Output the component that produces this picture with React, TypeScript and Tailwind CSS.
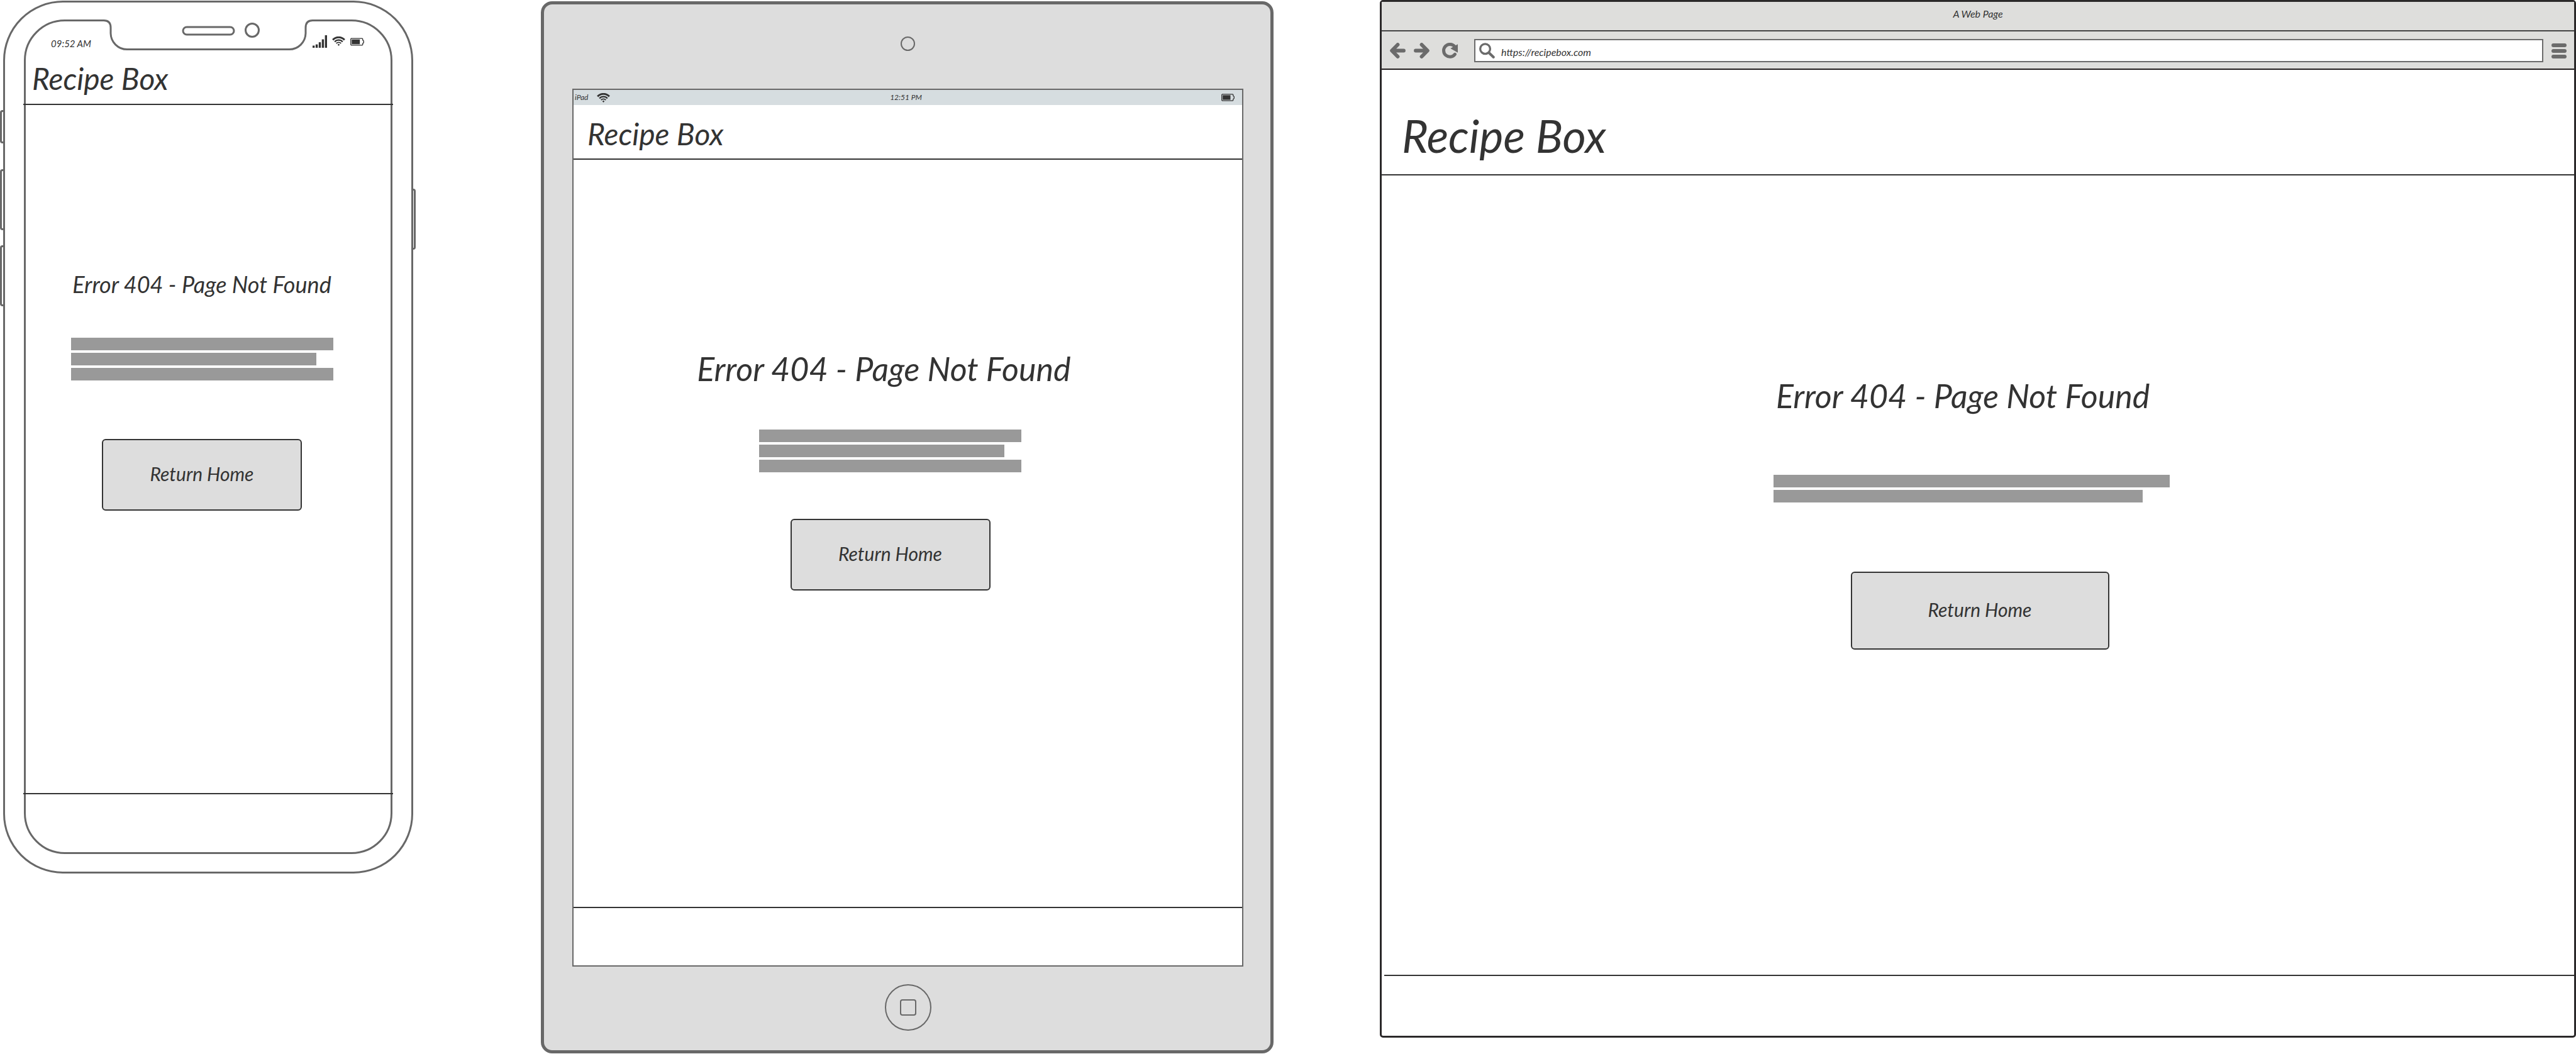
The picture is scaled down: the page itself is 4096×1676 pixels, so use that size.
import React from "react";

function WifiIcon({ className }: { className: string }) {
  return (
    <svg viewBox="0 0 28 20" className={className} fill="none" stroke="currentColor" aria-hidden="true">
      <path d="M1.6 7.2 A17 17 0 0 1 26.4 7.2" strokeWidth="4" />
      <path d="M5.6 11.2 A11.5 11.5 0 0 1 22.4 11.2" strokeWidth="3" />
      <path d="M9 14.6 A7 7 0 0 1 19 14.6" strokeWidth="2.6" />
      <path d="M14 15.6 L16.4 17.2 L14 20 L11.6 17.2 Z" fill="currentColor" stroke="none" />
    </svg>
  );
}

function BatteryIcon({ className }: { className: string }) {
  return (
    <svg viewBox="0 0 29 16" className={className} aria-hidden="true">
      <path d="M2 1 H25 L26 2 V4.5 L28 6 V10 L26 11.5 V14 L25 15 H2 L1 14 V2 Z" fill="none" stroke="currentColor" strokeWidth="1.8" />
      <rect x="3" y="3" width="17" height="10" fill="currentColor" />
    </svg>
  );
}

function SignalIcon({ className }: { className: string }) {
  return (
    <svg viewBox="0 0 30 26" className={className} fill="currentColor" aria-hidden="true">
      <rect x="0" y="21.5" width="4.4" height="4.5" />
      <rect x="6.4" y="19" width="4.4" height="7" />
      <rect x="12.8" y="14.5" width="4.4" height="11.5" />
      <rect x="19.2" y="8.5" width="4.4" height="17.5" />
      <rect x="25.6" y="0" width="4.4" height="26" />
    </svg>
  );
}

function ArrowIcon({ back }: { back?: boolean }) {
  return (
    <svg viewBox="0 0 32 32" className="size-[25px]" fill="none" stroke="#6b6b6b" strokeWidth="7.4" strokeLinecap="round" strokeLinejoin="round" aria-hidden="true">
      {back ? <path d="M16 3.8 L4 16 L16 28.2 M5 16 H28.2" /> : <path d="M16 3.8 L28 16 L16 28.2 M27 16 H3.8" />}
    </svg>
  );
}

function ReloadIcon() {
  return (
    <svg viewBox="0 0 32 32" className="size-[25px]" aria-hidden="true">
      <path d="M26.2 23.4 A12.7 12.7 0 1 1 25.6 7.6" fill="none" stroke="#6b6b6b" strokeWidth="6.4" strokeLinecap="round" />
      <path d="M32 3 V20 L17 11.6 Z" fill="#6b6b6b" />
    </svg>
  );
}

function SearchIcon() {
  return (
    <svg viewBox="0 0 32 32" className="size-[25px] shrink-0" fill="none" stroke="#6b6b6b" aria-hidden="true">
      <circle cx="12.2" cy="12.4" r="10.1" strokeWidth="4.2" />
      <path d="M20 20.5 L29 29.2" strokeWidth="5.4" strokeLinecap="round" />
    </svg>
  );
}

function TextLines({ widths }: { widths: string[] }) {
  return (
    <div className="flex flex-col gap-1">
      {widths.map((w, i) => (
        <div key={i} className={`h-5 bg-[#999999] ${w}`} />
      ))}
    </div>
  );
}

function HomeButton({ className }: { className: string }) {
  return (
    <button type="button" className={`flex items-center justify-center rounded-md border-2 border-[#333333] bg-[#dddddd] pb-1 text-[30px] leading-[40px] ${className}`}>
      Return Home
    </button>
  );
}

function Phone() {
  return (
    <section aria-label="Phone" className="relative pt-px pr-1 pl-[5px]">
      <div className="absolute top-[175px] left-0 h-[53px] w-[7px] rounded-l-[4px] border-[3px] border-r-0 border-[#686868]" />
      <div className="absolute top-[269px] left-0 h-[97px] w-[7px] rounded-l-[4px] border-[3px] border-r-0 border-[#686868]" />
      <div className="absolute top-[390px] left-0 h-[97px] w-[7px] rounded-l-[4px] border-[3px] border-r-0 border-[#686868]" />
      <div className="absolute top-[300px] right-0 h-[97px] w-[6px] rounded-r-[4px] border-[3px] border-l-0 border-[#686868]" />
      <div className="relative rounded-[95px] border-[3px] border-[#686868] bg-white px-[30px] pt-[27px] pb-7">
        <svg viewBox="0 0 336 50" className="absolute top-[27px] left-1/2 h-[50px] w-[336px] -translate-x-1/2" aria-hidden="true">
          <path d="M2 0 V1.5 Q13 1.5 13 13 V22 A26 26 0 0 0 39 47.5 H297 A26 26 0 0 0 323 22 V13 Q323 1.5 334 1.5 V0 Z" fill="white" />
          <path d="M0 1.5 H2 Q13 1.5 13 13 V22 A26 26 0 0 0 39 47.5 H297 A26 26 0 0 0 323 22 V13 Q323 1.5 334 1.5 H336" fill="none" stroke="#686868" strokeWidth="3" />
          <rect x="128" y="12" width="81" height="12" rx="6" fill="none" stroke="#686868" strokeWidth="3" />
          <circle cx="238" cy="17" r="10.500" fill="none" stroke="#686868" strokeWidth="3" />
        </svg>
        <div className="rounded-[65px] border-[3px] border-[#686868]">
          <div className="flex h-[52px] items-end justify-between pr-[42px] pb-2.5 pl-10">
            <span className="text-[15px] leading-[14px]">09:52 AM</span>
            <div className="flex items-end gap-2">
              <SignalIcon className="h-5 w-[23px]" />
              <WifiIcon className="mb-[3px] h-[15px] w-[21px]" />
              <BatteryIcon className="mb-[3px] h-[13px] w-[22px]" />
            </div>
          </div>
          <header className="-mx-1 border-b-2 border-[#333333] px-3.5 pt-[9px] pb-2.5">
            <h1 className="text-[48px] leading-[60px]">Recipe Box</h1>
          </header>
          <main className="flex h-[1094px] flex-col items-center pt-[265px] pr-5">
            <h2 className="mb-[65px] text-[36px] leading-[40px] whitespace-nowrap">Error 404 - Page Not Found</h2>
            <TextLines widths={["w-[417px]", "w-[390px]", "w-[417px]"]} />
            <HomeButton className="mt-[93px] h-[114px] w-[318px]" />
          </main>
          <footer className="-mx-1 h-[94px] border-t-2 border-[#333333]" />
        </div>
      </div>
    </section>
  );
}

function Tablet() {
  return (
    <section aria-label="Tablet" className="mt-0.5 rounded-[18px] border-[5px] border-[#686868] bg-[#dddddd] pr-[43px] pl-[45px]">
      <div className="flex justify-center pt-[51px] pb-[60px]">
        <div className="size-[23px] rounded-full border-2 border-[#686868]" />
      </div>
      <div className="border-2 border-[#686868] bg-white">
        <div className="grid h-6 grid-cols-3 items-center bg-[#d6dde0] pr-3 pl-0.5 text-[12px] leading-[20px]">
          <div className="flex items-center gap-3.5">
            <span>iPad</span>
            <WifiIcon className="h-[15px] w-[21px]" />
          </div>
          <span className="pl-1 text-center">12:51 PM</span>
          <BatteryIcon className="h-[12px] w-[21px] justify-self-end" />
        </div>
        <header className="border-b-2 border-[#333333] px-[22px] pt-4 pb-[9px]">
          <h1 className="text-[48px] leading-[60px]">Recipe Box</h1>
        </header>
        <main className="flex h-[1188px] flex-col items-center pt-[304px] pr-14">
          <h2 className="mr-5 mb-[69px] text-[52px] leading-[56px] whitespace-nowrap">Error 404 - Page Not Found</h2>
          <TextLines widths={["w-[417px]", "w-[390px]", "w-[417px]"]} />
          <HomeButton className="mt-[74px] h-[114px] w-[318px]" />
        </main>
        <footer className="h-[93px] border-t-2 border-[#333333]" />
      </div>
      <div className="flex justify-center pt-7 pb-[31px]">
        <button type="button" aria-label="Home" className="flex size-[74px] items-center justify-center rounded-full border-2 border-[#686868]">
          <span className="size-[26px] rounded-[4px] border-2 border-[#686868]" />
        </button>
      </div>
    </section>
  );
}

function Browser() {
  return (
    <section aria-label="Browser" className="rounded-[5px] border-[3px] border-[#2b292a] bg-white">
      <div className="h-[47px] border-b-2 border-[#444444] bg-[#dededc] pt-1 text-center text-[16px] leading-[30px]">A Web Page</div>
      <div className="flex items-center border-b-2 border-[#231f20] bg-[#dededc] pt-3 pr-3 pb-2.5 pl-[13px]">
        <button type="button" aria-label="Back"><ArrowIcon back /></button>
        <button type="button" aria-label="Forward" className="ml-[13px]"><ArrowIcon /></button>
        <button type="button" aria-label="Reload" className="ml-5"><ReloadIcon /></button>
        <div className="mr-[13px] ml-[26px] flex h-[37px] flex-1 items-center gap-1.5 border-2 border-[#6b6b6b] bg-white px-1.5">
          <SearchIcon />
          <input type="text" aria-label="Address" defaultValue="https://recipebox.com" className="h-7 min-w-0 flex-1 px-1 pt-1 text-[16px] leading-[24px] italic outline-none" />
        </div>
        <button type="button" aria-label="Menu" className="flex w-6 flex-col gap-[3px]">
          <span className="h-1.5 rounded-[3px] bg-[#6b6b6b]" />
          <span className="h-1.5 rounded-[3px] bg-[#6b6b6b]" />
          <span className="h-1.5 rounded-[3px] bg-[#6b6b6b]" />
        </button>
      </div>
      <header className="border-b-2 border-[#333333] px-8 pt-[60px] pb-[18px]">
        <h1 className="text-[72px] leading-[88px]">Recipe Box</h1>
      </header>
      <main className="flex h-[1271px] flex-col items-center pt-[322px] pr-5">
        <div>
          <h2 className="mb-[98px] pl-1 text-[52px] leading-[56px] whitespace-nowrap">Error 404 - Page Not Found</h2>
          <TextLines widths={["w-[630px]", "w-[587px]"]} />
        </div>
        <HomeButton className="mt-[110px] ml-[26px] h-[124px] w-[411px]" />
      </main>
      <footer className="ml-1 h-[97px] border-t-2 border-[#333333]" />
    </section>
  );
}

export default function App() {
  return (
    <div className="grid min-h-screen grid-cols-[860fr_1334fr_1902fr] items-start bg-white font-['Lato','Noto_Sans',sans-serif] text-[#333333] italic">
      <div className="pr-[199px]"><Phone /></div>
      <div className="pr-[169px]"><Tablet /></div>
      <Browser />
    </div>
  );
}
